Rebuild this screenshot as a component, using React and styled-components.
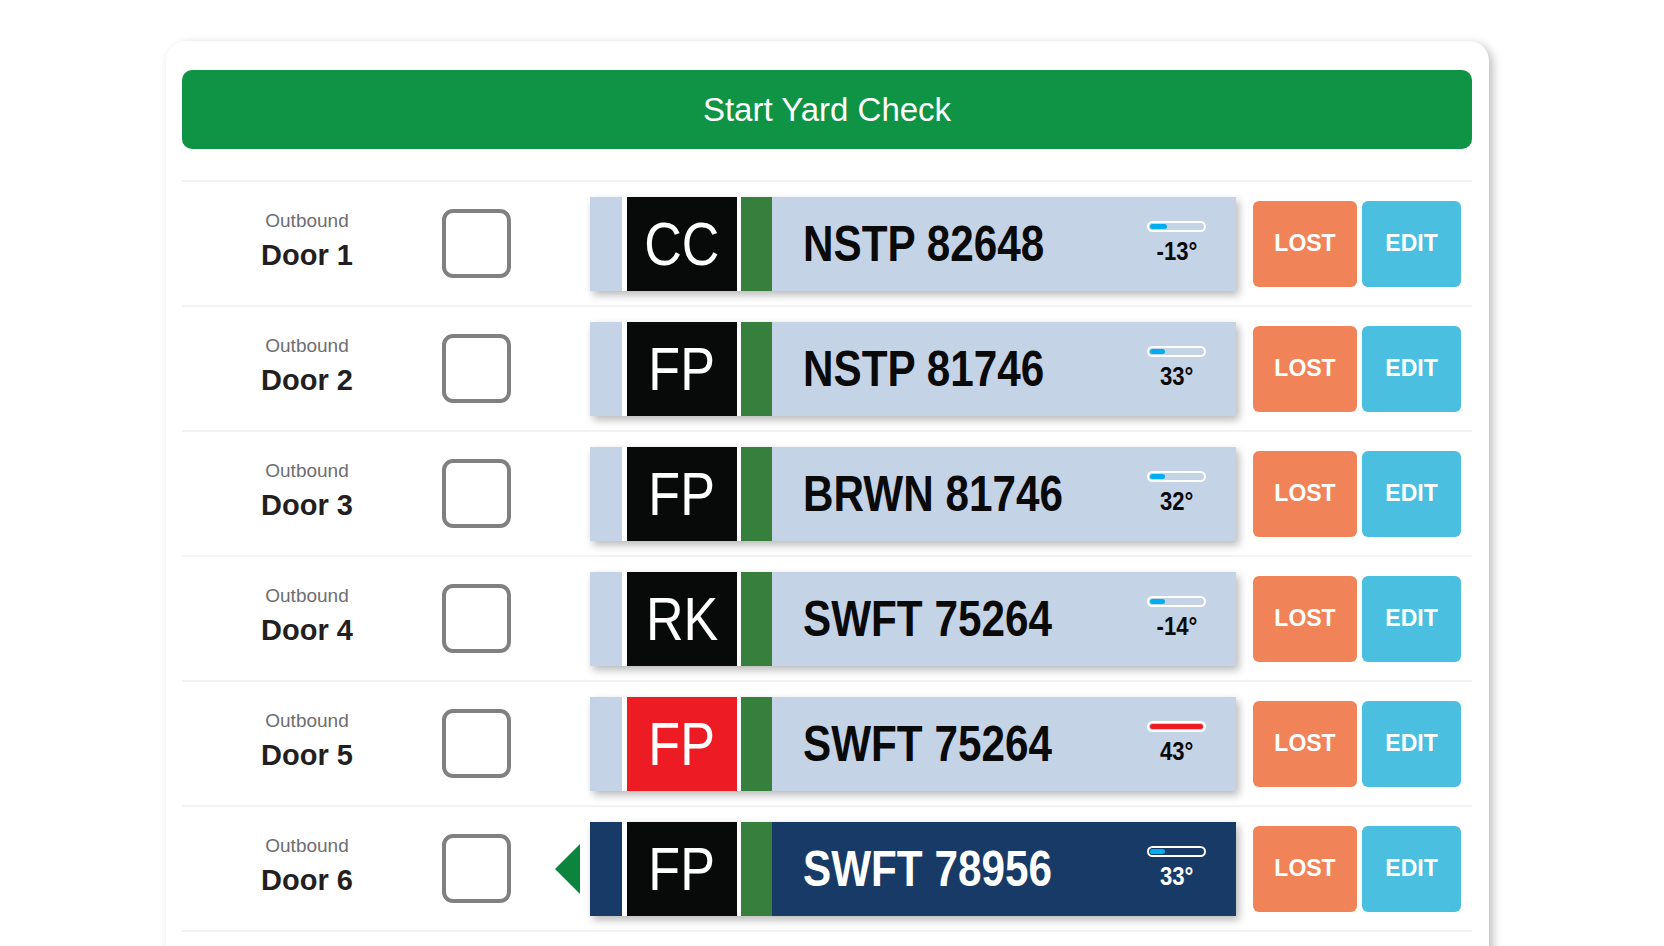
import React from "react";
import styled, { createGlobalStyle } from "styled-components";

const GlobalStyle = createGlobalStyle`
    html, body {
        margin: 0;
        padding: 0;
        background: #ffffff;
        overflow: hidden;
    }
    body {
        font-family: "Liberation Sans", Arial, sans-serif;
    }
`

const Page = styled.div`
    padding: 41px 0 0 166px;
`

const Card = styled.div`
    width: 1323px;
    box-sizing: border-box;
    background: #ffffff;
    border-radius: 20px;
    box-shadow: 4px 3px 10px rgba(0, 0, 0, 0.25);
    padding: 29px 17px 60px 16px;
`

const StartButton = styled.div`
    height: 79px;
    border-radius: 10px;
    background: #0e9444;
    color: #ffffff;
    font-size: 33px;
    display: flex;
    align-items: center;
    justify-content: center;
    margin-bottom: 31px;
`

const List = styled.div`
    border-top: 2px solid #f2f2f2;
`

const Row = styled.div`
    height: 123px;
    border-bottom: 2px solid #f2f2f2;
    display: flex;
    align-items: center;
`

const DoorLabel = styled.div`
    width: 250px;
    display: flex;
    flex-direction: column;
    align-items: center;
    padding-bottom: 6px;
`

const Direction = styled.div`
    font-size: 19px;
    line-height: 22px;
    color: #6d6e71;
`

const DoorName = styled.div`
    font-size: 29px;
    line-height: 34px;
    font-weight: bold;
    color: #231f20;
    margin-top: 6px;
`

const CheckBox = styled.div`
    width: 69px;
    height: 69px;
    box-sizing: border-box;
    margin-left: 10px;
    border: 4px solid #808080;
    border-radius: 11px;
    background: #ffffff;
`

const ArrowSlot = styled.div`
    width: 79px;
    display: flex;
    justify-content: flex-end;
    padding-right: 10px;
    box-sizing: border-box;
`

const Arrow = styled.div`
    width: 0;
    height: 0;
    border-top: 25px solid transparent;
    border-bottom: 25px solid transparent;
    border-right: 25px solid #0b843e;
`

const Trailer = styled.div`
    width: 646px;
    height: 94px;
    display: flex;
    align-items: stretch;
    padding-left: 32px;
    box-sizing: border-box;
    background: ${p => (p.$active ? "#173a66" : "#c5d3e6")};
    color: ${p => (p.$active ? "#ffffff" : "#0a0a0a")};
    box-shadow: 3px 4px 8px rgba(0, 0, 0, 0.28);
`

// no narrow face installed, so squeeze the regular one
const Narrow = styled.span`
    display: inline-block;
    transform: scaleX(${p => p.$scale || 0.82});
    transform-origin: ${p => p.$origin || "center"};
    white-space: nowrap;
`

const Carrier = styled.div`
    width: 110px;
    border-left: 5px solid #ffffff;
    border-right: 4px solid #ffffff;
    background: ${p => (p.$alert ? "#ed1c24" : "#080a09")};
    color: #ffffff;
    display: flex;
    align-items: center;
    justify-content: center;
    font-size: 62px;
`

const Stripe = styled.div`
    width: 31px;
    background: #377f3d;
`

const TrailerNo = styled.div`
    flex: 1;
    display: flex;
    align-items: center;
    padding-left: 31px;
    font-weight: bold;
    font-size: 50px;
`

const Temp = styled.div`
    width: 59px;
    margin-right: 30px;
    display: flex;
    flex-direction: column;
    align-items: center;
    justify-content: center;
`

const Gauge = styled.div`
    width: 59px;
    height: 11px;
    box-sizing: border-box;
    border: 2px solid #ffffff;
    border-radius: 6px;
    overflow: hidden;
    padding: 1px;
`

const GaugeFill = styled.div`
    height: 100%;
    border-radius: 3px;
    background: ${p => (p.$hot ? "#ed1c24" : "#00aeef")};
`

const TempValue = styled.div`
    font-weight: bold;
    font-size: 26px;
    line-height: 30px;
    margin-top: 4px;
`

const Actions = styled.div`
    display: flex;
    gap: 5px;
    margin-left: 17px;
`

const ActionButton = styled.div`
    width: ${p => p.$w}px;
    height: 86px;
    border-radius: 6px;
    background: ${p => p.$bg};
    color: #ffffff;
    font-weight: bold;
    font-size: 23px;
    display: flex;
    align-items: center;
    justify-content: center;
`

const doors = [
    { door: "Door 1", code: "CC", trailer: "NSTP 82648", temp: "-13°", level: 33 },
    { door: "Door 2", code: "FP", trailer: "NSTP 81746", temp: "33°", level: 28 },
    { door: "Door 3", code: "FP", trailer: "BRWN 81746", temp: "32°", level: 28 },
    { door: "Door 4", code: "RK", trailer: "SWFT 75264", temp: "-14°", level: 28 },
    { door: "Door 5", code: "FP", trailer: "SWFT 75264", temp: "43°", level: 100, hot: true },
    { door: "Door 6", code: "FP", trailer: "SWFT 78956", temp: "33°", level: 28, active: true },
];

const App = () => {
    return (
        <Page>
            <GlobalStyle />
            <Card>
                <StartButton>Start Yard Check</StartButton>
                <List>
                    {doors.map((d, index) => (
                        <Row key={index}>
                            <DoorLabel>
                                <Direction>Outbound</Direction>
                                <DoorName>{d.door}</DoorName>
                            </DoorLabel>
                            <CheckBox />
                            <ArrowSlot>{d.active && <Arrow />}</ArrowSlot>
                            <Trailer $active={d.active}>
                                <Carrier $alert={d.hot}>
                                    <Narrow $scale={0.84}>{d.code}</Narrow>
                                </Carrier>
                                <Stripe />
                                <TrailerNo>
                                    <Narrow $origin="left" $scale={0.845}>{d.trailer}</Narrow>
                                </TrailerNo>
                                <Temp>
                                    <Gauge>
                                        <GaugeFill $hot={d.hot} style={{ width: `${d.level}%` }} />
                                    </Gauge>
                                    <TempValue>
                                        <Narrow $scale={0.85}>{d.temp}</Narrow>
                                    </TempValue>
                                </Temp>
                            </Trailer>
                            <Actions>
                                <ActionButton $w={104} $bg="#f08358">LOST</ActionButton>
                                <ActionButton $w={99} $bg="#4bbfe0">EDIT</ActionButton>
                            </Actions>
                        </Row>
                    ))}
                </List>
            </Card>
        </Page>
    )
}

export default App;
